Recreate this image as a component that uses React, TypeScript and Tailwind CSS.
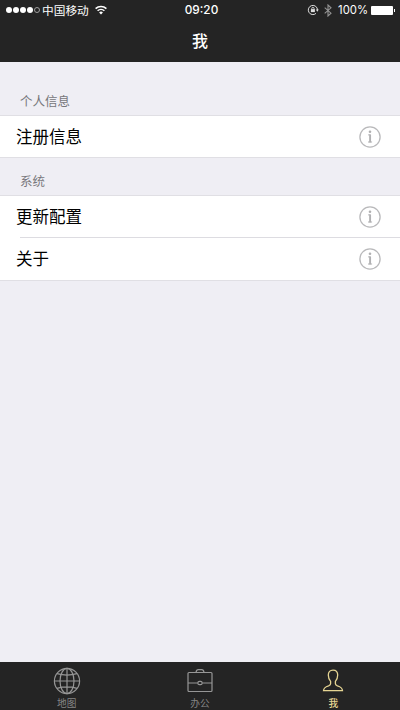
import React from 'react';

interface Section {
  title: string;
  items: string[];
}

const sections: Section[] = [
  { title: '个人信息', items: ['注册信息'] },
  { title: '系统', items: ['更新配置', '关于'] },
];

const InfoIcon: React.FC = () => (
  <svg width="22" height="22" viewBox="0 0 22 22" fill="none">
    <circle cx="11" cy="11" r="10.1" stroke="#b9b9bb" strokeWidth="1.3" />
    <circle cx="11" cy="5.7" r="1.3" fill="#b0b0b2" />
    <path d="M9.1 8.9h2M9 16h4.1" stroke="#b0b0b2" strokeWidth="1" />
    <path d="M11.1 8.4v8" stroke="#b0b0b2" strokeWidth="1.9" />
  </svg>
);

const WifiIcon: React.FC = () => (
  <svg width="12" height="10" viewBox="0 0 12 10" fill="none" stroke="#fff" strokeWidth="1.5">
    <path d="M.6 3.6a7.7 7.7 0 0 1 10.8 0M2.6 5.8a4.9 4.9 0 0 1 6.8 0" />
    <path d="M6 9.4 4.1 7.5a2.7 2.7 0 0 1 3.8 0Z" fill="#fff" stroke="none" />
  </svg>
);

const RotationLockIcon: React.FC = () => (
  <svg width="12" height="12" viewBox="0 0 12 12" fill="none" stroke="#dcdcdc">
    <path d="M9 9.4A4.6 4.6 0 1 1 10.5 6" />
    <path d="M8.9 5.5h2.9L10.3 7.8Z" fill="#dcdcdc" stroke="none" />
    <path d="M4.8 5.3V4.4a1.1 1.1 0 0 1 2.2 0v.9" strokeWidth="0.9" />
    <rect x="3.9" y="5.1" width="4" height="3" fill="#dcdcdc" stroke="none" />
  </svg>
);

const BluetoothIcon: React.FC = () => (
  <svg width="8" height="13" viewBox="0 0 8 13" fill="none" stroke="#949494" strokeWidth="1.1">
    <path d="M.7 3.6 7 9.2 4 12V1l3 2.8L.7 9.4" />
  </svg>
);

const StatusBar: React.FC = () => (
  <div className="flex h-5 items-center text-white">
    <div className="flex flex-1 items-center pl-[6px]">
      <div className="flex items-center gap-px">
        {[0, 1, 2, 3].map((dot) => (
          <span key={dot} className="size-[6px] rounded-full bg-white" />
        ))}
        <span className="size-[6px] rounded-full border border-[#a0a0a0]" />
      </div>
      <span className="ml-[2px] text-[11.7px] leading-5">中国移动</span>
      <span className="ml-[6px]">
        <WifiIcon />
      </span>
    </div>
    <span className="w-10 pl-[2px] text-center font-['Inter'] text-[11.8px] leading-[21px] font-medium whitespace-nowrap">
      09:20
    </span>
    <div className="flex flex-1 items-center justify-end pr-[5px]">
      <RotationLockIcon />
      <span className="ml-[5px]">
        <BluetoothIcon />
      </span>
      <span className="ml-[6px] font-['Inter'] text-[11.3px] leading-[21px]">100%</span>
      <span className="ml-[3px] h-[9px] w-[22px] rounded-[1px] bg-white" />
      <span className="ml-px h-[3px] w-px bg-white" />
    </div>
  </div>
);

const GlobeIcon: React.FC = () => (
  <svg width="28" height="28" viewBox="0 0 28 28" fill="none" stroke="#969696" strokeWidth="1.2">
    <circle cx="14" cy="14" r="12.6" />
    <ellipse cx="14" cy="14" rx="7" ry="12.6" />
    <path d="M14 1.3v25.4M1.3 14h25.4M4 6.7c5.8 1.6 14.2 1.6 20 0M4 21.3c5.8-1.6 14.2-1.6 20 0" />
  </svg>
);

const BriefcaseIcon: React.FC = () => (
  <svg width="28" height="28" viewBox="0 0 28 28" fill="none" stroke="#969696" strokeWidth="1.2">
    <rect x="2" y="5.5" width="24" height="19" rx="1" />
    <path d="M10 5.3c.3-1.9 1.2-2.6 2.3-2.6h3.4c1.1 0 2 .7 2.3 2.6M2 16h9.8M16.2 16H26" />
    <rect x="11.9" y="14.3" width="4.2" height="3.4" rx="1.5" />
  </svg>
);

const PersonIcon: React.FC = () => (
  <svg width="28" height="28" viewBox="0 0 28 28" fill="none" stroke="#e6d593" strokeWidth="1.3">
    <path d="M14 3.1c-2.9 0-4.7 2-4.7 5 0 2.8.9 4.8 2.3 6.3v2.4c0 1-.7 1.600-2 2.100-3.700 1.200-4.900 2-5.100 4.800h19c-.2-2.800-1.400-3.600-5.100-4.800-1.300-.5-2-1.100-2-2.100v-2.400c1.400-1.500 2.300-3.500 2.300-6.300 0-3-1.800-5-4.700-5Z" />
  </svg>
);

const tabs = [
  { label: '地图', icon: <GlobeIcon />, active: false },
  { label: '办公', icon: <BriefcaseIcon />, active: false },
  { label: '我', icon: <PersonIcon />, active: true },
];

const App: React.FC = () => {
  return (
    <div className="flex h-[710px] w-full flex-col overflow-hidden bg-[#efeef4] font-['Noto_Sans_CJK_SC',sans-serif]">
      <header className="h-[62px] shrink-0 bg-[#242424]">
        <StatusBar />
        <h1 className="h-[42px] text-center text-[16px] leading-[41px] font-medium text-white">我</h1>
      </header>

      <main className="flex-1 pt-4">
        {sections.map((section) => (
          <section key={section.title}>
            <h2 className="flex h-[37px] items-end pb-[4px] pl-5 text-[12.5px] leading-5 text-[#77777b]">
              {section.title}
            </h2>
            <ul className="border-y border-[#e0dfe4] bg-white">
              {section.items.map((item, index) => (
                <li key={item}>
                  {index > 0 && <div className="ml-5 h-px bg-[#dddce1]" />}
                  <div
                    className={`flex items-center justify-between pr-[19px] pl-4 ${
                      index > 0 ? 'h-[42px]' : 'h-[41px]'
                    }`}
                  >
                    <span className="pb-[2px] text-[16.5px] leading-6 text-black">{item}</span>
                    <InfoIcon />
                  </div>
                </li>
              ))}
            </ul>
          </section>
        ))}
      </main>

      <nav className="flex h-[48px] shrink-0 bg-[#242424]">
        {tabs.map((tab) => (
          <button key={tab.label} className="flex flex-1 flex-col items-center pt-[5px]">
            <span className="size-7 shrink-0">{tab.icon}</span>
            <span
              className={`mt-[2px] text-[9.7px] leading-[13px] ${
                tab.active ? 'font-medium text-[#e6d593]' : 'text-[#858585]'
              }`}
            >
              {tab.label}
            </span>
          </button>
        ))}
      </nav>
    </div>
  );
};

export default App;
